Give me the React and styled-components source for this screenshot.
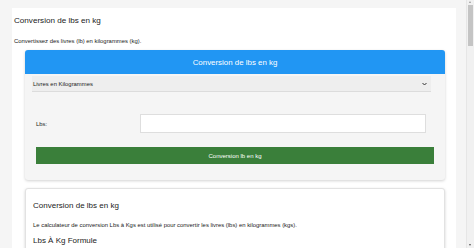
import styled, { createGlobalStyle } from "styled-components"

const GlobalStyle = createGlobalStyle`
  html, body {
    margin: 0;
    padding: 0;
    overflow: hidden;
    background: #f5f5f5;
    font-family: "Liberation Sans", Arial, sans-serif;
    color: #222;
  }
`

const Page = styled.div`
  width: 466px;
  padding-top: 8px;
`

const Container = styled.div`
  width: 444px;
  margin-left: 12px;
  background: #fff;
  padding: 0 0 4px 2px;
  box-sizing: border-box;
  min-height: 260px;
`

const PageTitle = styled.h1`
  margin: 0;
  padding-top: 8px;
  font-size: 8.1px;
  line-height: 10px;
  font-weight: normal;
`

const Intro = styled.p`
  margin: 0;
  padding-top: 11px;
  font-size: 5.9px;
  line-height: 8px;
`

const Card = styled.div`
  margin: ${(p) => p.$top}px 11px 0 11px;
  background: ${(p) => (p.$white ? "#fff" : "#f5f5f5")};
  border: ${(p) => (p.$white ? "1px solid #e2e2e2" : "none")};
  border-radius: 3px;
  box-shadow: 0 1px 3px rgba(0, 0, 0, 0.18);
  overflow: hidden;
`

const CardHeader = styled.div`
  height: 24px;
  background: #2196f3;
  color: #fff;
  display: flex;
  align-items: center;
  justify-content: center;
  font-size: 7.9px;
`

const SelectBox = styled.div`
  margin: 2px 14px 0 7px;
  height: 16px;
  background: #eeeeee;
  border-bottom: 1px solid #dcdcdc;
  display: flex;
  align-items: center;
  justify-content: space-between;
  padding: 0 4px 0 1px;
  font-size: 5.9px;
  box-sizing: border-box;
`

const FieldRow = styled.div`
  display: grid;
  grid-template-columns: 104px 1fr;
  align-items: center;
  margin: 22px 19px 0 11px;
`

const Label = styled.label`
  font-size: 5.9px;
  padding-top: 1px;
`

const Input = styled.div`
  height: 19px;
  background: #fff;
  border: 1px solid #dedede;
  box-sizing: border-box;
`

const Button = styled.div`
  margin: 14px 11px 16px 11px;
  height: 17px;
  background: #3a7f3a;
  color: #fff;
  display: flex;
  align-items: center;
  justify-content: center;
  font-size: 6px;
`

const InfoBody = styled.div`
  padding: 0 8px 10px 7px;
`

const InfoTitle = styled.h2`
  margin: 0;
  padding-top: 12px;
  font-size: 8px;
  line-height: 10px;
  font-weight: normal;
`

const InfoText = styled.p`
  margin: 0;
  padding-top: 10px;
  font-size: 5.9px;
  line-height: 8px;
`

const InfoSub = styled.h3`
  margin: 0;
  padding-top: 7px;
  font-size: 8px;
  line-height: 10px;
  font-weight: normal;
`

const ScrollTrack = styled.div`
  position: fixed;
  top: 0;
  right: 0;
  width: 7px;
  height: 100%;
  background: #f1f1f1;
  border-left: 1px solid #e6e6e6;
`

const ScrollThumb = styled.div`
  position: absolute;
  top: 5px;
  left: 1px;
  width: 5px;
  height: 41px;
  background: #c4c4c4;
`

const ScrollArrow = styled.div`
  position: absolute;
  left: 2px;
  width: 0;
  height: 0;
  border-left: 1.5px solid transparent;
  border-right: 1.5px solid transparent;
  ${(p) =>
    p.$down
      ? "bottom: 2px; border-top: 2px solid #555;"
      : "top: 1px; border-bottom: 2px solid #999;"}
`

function Chevron() {
  return (
    <svg width="5" height="4" viewBox="0 0 10 8">
      <path d="M1 2 L5 6 L9 2" fill="none" stroke="#333" strokeWidth="2" />
    </svg>
  )
}

export default function App() {
  return (
    <>
      <GlobalStyle />
      <Page>
        <Container>
          <PageTitle>Conversion de lbs en kg</PageTitle>
          <Intro>Convertissez des livres (lb) en kilogrammes (kg).</Intro>

          <Card $top={5}>
            <CardHeader>Conversion de lbs en kg</CardHeader>
            <SelectBox>
              <span>Livres en Kilogrammes</span>
              <Chevron />
            </SelectBox>
            <FieldRow>
              <Label>Lbs:</Label>
              <Input />
            </FieldRow>
            <Button>Conversion lb en kg</Button>
          </Card>

          <Card $top={8} $white>
            <InfoBody>
              <InfoTitle>Conversion de lbs en kg</InfoTitle>
              <InfoText>
                Le calculateur de conversion Lbs à Kgs est utilisé pour convertir les livres (lbs) en kilogrammes (kgs).
              </InfoText>
              <InfoSub>Lbs À Kg Formule</InfoSub>
            </InfoBody>
          </Card>
        </Container>
      </Page>
      <ScrollTrack>
        <ScrollArrow />
        <ScrollThumb />
        <ScrollArrow $down />
      </ScrollTrack>
    </>
  )
}
